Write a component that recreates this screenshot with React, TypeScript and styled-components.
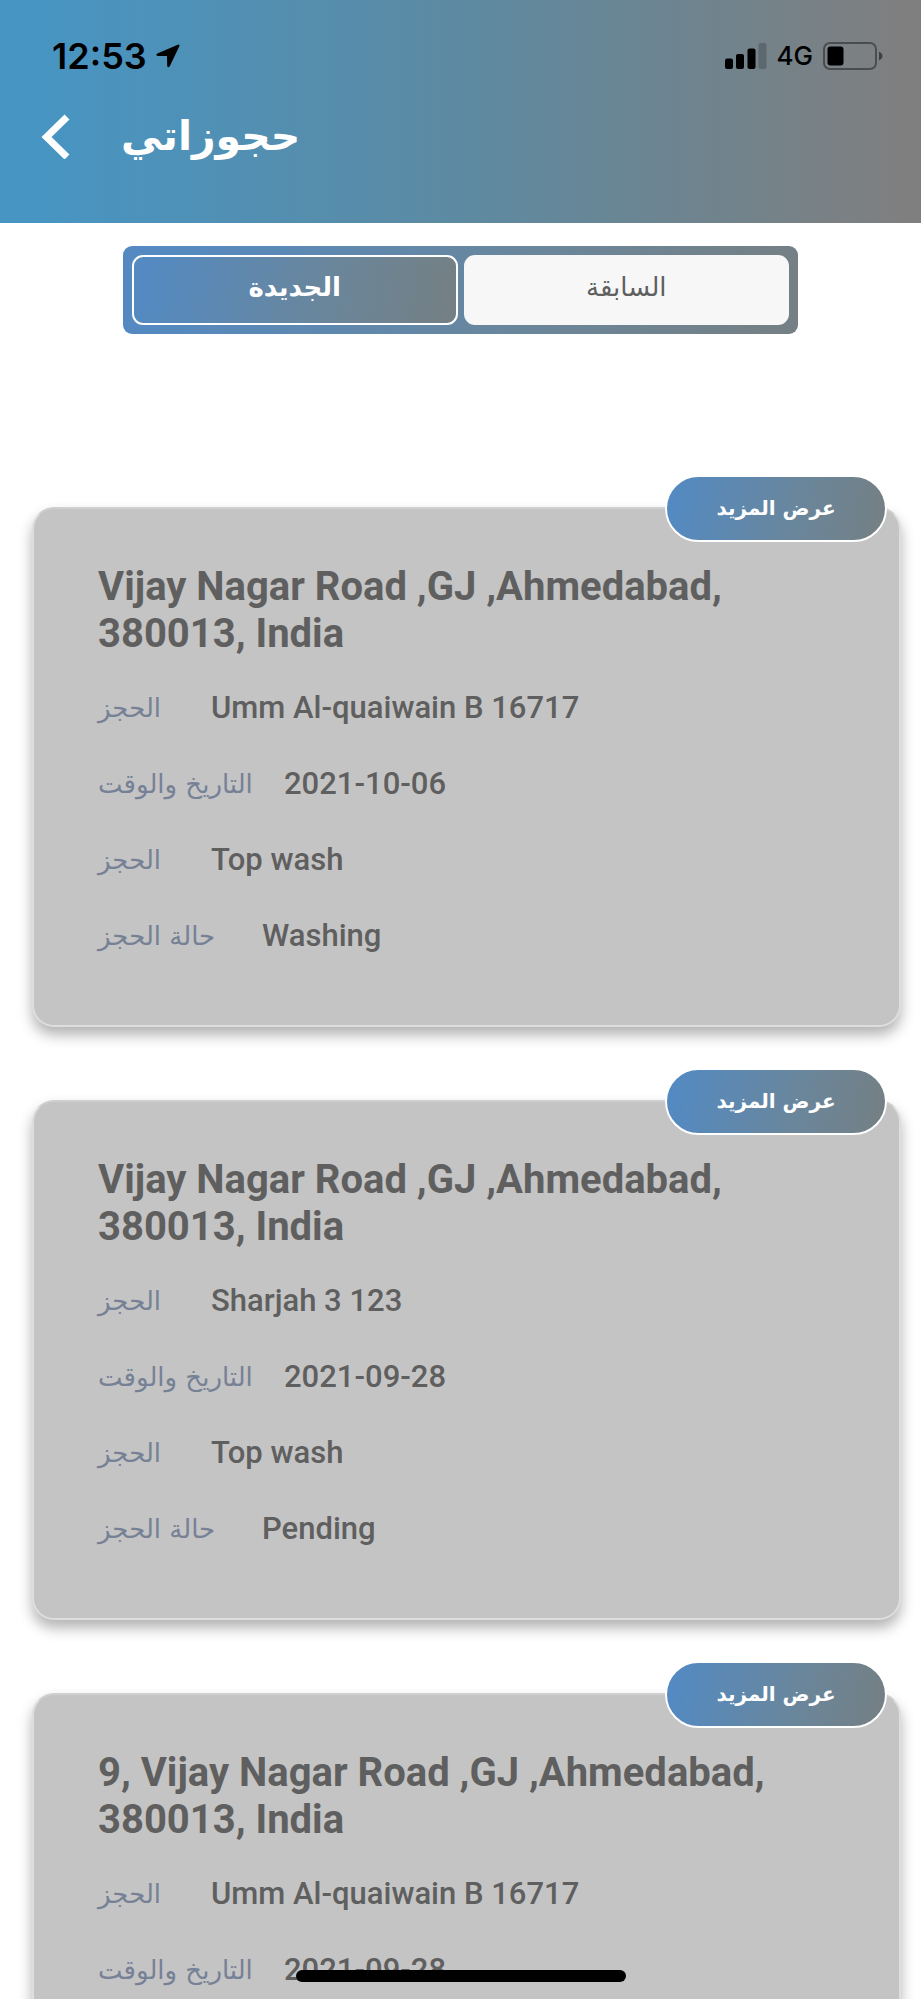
import React from "react";
import styled, { createGlobalStyle } from "styled-components";

const GlobalStyle = createGlobalStyle`
  *, *::before, *::after { box-sizing: border-box; }
  body { margin: 0; background: #fff; }
  button { font: inherit; color: inherit; cursor: pointer; }
`;

const arabic = `"DejaVu Sans", "Noto Sans", sans-serif`;
const blueToGray = "linear-gradient(100deg, #548ac1 6%, #6a869b 60%, #748085 96%)";

const Screen = styled.div`
  position: relative;
  height: 100vh;
  overflow: hidden;
  padding: 0 3px 0 0;
  background: #fff;
  border-bottom: 1px solid #fff;
  font-family: Roboto, sans-serif;
  color: #5f5f5f;
`;

const Header = styled.header`
  height: 223px;
  background: linear-gradient(90deg, #4795c3 4%, #5d8aa2 50%, #6f848e 76%, #807f7f 99%);
`;

const StatusBar = styled.div`
  display: flex;
  align-items: center;
  justify-content: space-between;
  height: 112px;
  padding: 0 38px 0 52px;
  color: #000;
  font-family: Inter, sans-serif;
`;

const StatusGroup = styled.div<{ $gap: number }>`
  display: flex;
  align-items: center;
  gap: ${(p) => p.$gap}px;
`;

const Clock = styled.span`
  font-size: 36px;
  font-weight: 600;
  line-height: 40px;
`;

const Network = styled.span`
  font-size: 26px;
  font-weight: 500;
  line-height: 32px;
`;

const TitleBar = styled.div`
  display: flex;
  align-items: center;
  gap: 51px;
  height: 48px;
  padding-left: 40px;
  color: #fff;
`;

const BackButton = styled.button`
  display: flex;
  padding: 0;
  border: 0;
  background: none;
`;

const PageTitle = styled.h1`
  margin: 0;
  font: 700 41px/48px ${arabic};
`;

const Tabs = styled.div`
  display: flex;
  gap: 6px;
  height: 88px;
  margin: 23px 123px 0;
  padding: 9px;
  border-radius: 9px;
  background: ${blueToGray};
`;

const Tab = styled.button<{ $active?: boolean }>`
  flex: 1;
  padding: 0 0 6px;
  border-radius: 11px;
  border: 2px solid ${(p) => (p.$active ? "#fff" : "#f7f7f7")};
  background: ${(p) => (p.$active ? blueToGray : "#f7f7f7")};
  background-origin: border-box;
  color: ${(p) => (p.$active ? "#fff" : "#5f5f5f")};
  font: ${(p) => (p.$active ? 700 : 400)} 26px/32px ${arabic};
`;

const List = styled.main`
  display: flex;
  flex-direction: column;
  gap: 73px;
  padding: 173px 20px 0 32px;
`;

const Card = styled.article`
  position: relative;
  min-height: 520px;
  padding: 54px 64px 44px;
  border: 2px solid #dedede;
  border-top-color: #cfcfcf;
  border-radius: 22px;
  background: #c4c4c4;
  box-shadow: 0 8px 14px rgba(0, 0, 0, 0.3);
`;

const MoreButton = styled.button`
  position: absolute;
  top: -34px;
  right: 12px;
  width: 222px;
  height: 67px;
  padding: 0 0 2px;
  border: 2px solid #fff;
  border-radius: 34px;
  background: ${blueToGray};
  background-origin: border-box;
  color: #fff;
  font: 700 20px/32px ${arabic};
`;

const Address = styled.h2`
  max-width: 680px;
  margin: 0 0 31px;
  font-size: 40px;
  font-weight: 700;
  line-height: 47px;
`;

const Details = styled.dl`
  display: flex;
  flex-direction: column;
  gap: 36px;
  margin: 0;
`;

const Detail = styled.div`
  display: flex;
  align-items: center;
  height: 40px;
`;

const labelWidths = { short: 113, medium: 164, long: 186 };
type LabelSize = keyof typeof labelWidths;

const Label = styled.dt<{ $size: LabelSize }>`
  flex: 0 0 ${(p) => labelWidths[p.$size]}px;
  color: #768196;
  font: 400 26px/32px ${arabic};
  white-space: nowrap;
`;

const Value = styled.dd`
  margin: 0;
  font-size: 31px;
  font-weight: 500;
  line-height: 40px;
`;

const HomeIndicator = styled.div`
  position: absolute;
  left: 50%;
  bottom: 17px;
  width: 330px;
  height: 12px;
  margin-left: -166px;
  border-radius: 6px;
  background: #000;
`;

type Row = { label: string; size: LabelSize; value: string };
const booking = (value: string): Row => ({ label: "الحجز", size: "short", value });
const date = (value: string): Row => ({ label: "التاريخ والوقت", size: "long", value });
const status = (value: string): Row => ({ label: "حالة الحجز", size: "medium", value });

const bookings: { address: string; rows: Row[] }[] = [
  {
    address: "Vijay Nagar Road ,GJ ,Ahmedabad, 380013, India",
    rows: [booking("Umm Al-quaiwain B 16717"), date("2021-10-06"), booking("Top wash"), status("Washing")],
  },
  {
    address: "Vijay Nagar Road ,GJ ,Ahmedabad, 380013, India",
    rows: [booking("Sharjah 3 123"), date("2021-09-28"), booking("Top wash"), status("Pending")],
  },
  {
    address: "9, Vijay Nagar Road ,GJ ,Ahmedabad, 380013, India",
    rows: [booking("Umm Al-quaiwain B 16717"), date("2021-09-28")],
  },
];

export default function App() {
  return (
    <Screen>
      <GlobalStyle />
      <Header>
        <StatusBar>
          <StatusGroup $gap={9}>
            <Clock>12:53</Clock>
            <svg width="24" height="24" viewBox="0 0 24 24" aria-hidden="true">
              <path d="M21.800.7 1.400 9.400C-.3 10.200.1 12 1.900 12H11l.2 9.500c0 2 1.900 2.400 2.700.6L23.300 2.300C23.900.9 23.100.1 21.800.7Z" fill="#000" />
            </svg>
          </StatusGroup>
          <StatusGroup $gap={10}>
            <svg width="42" height="26" viewBox="0 0 42 26" aria-hidden="true">
              <rect x="0" y="15.500" width="8" height="10.500" rx="2" />
              <rect x="11" y="11" width="8" height="15" rx="2" />
              <rect x="22.500" y="5.500" width="8" height="20.500" rx="2" />
              <rect x="33.500" y="0" width="8" height="26" rx="2" opacity="0.2" />
            </svg>
            <Network>4G</Network>
            <svg width="60" height="28" viewBox="0 0 60 28" aria-hidden="true">
              <rect x="1" y="1" width="52" height="26" rx="6" fill="none" stroke="#000" strokeOpacity="0.4" strokeWidth="2" />
              <rect x="4.500" y="4.500" width="16" height="19" rx="3" />
              <path d="M56 9.500q3.500 2 3.500 4.500T56 18.500Z" opacity="0.5" />
            </svg>
          </StatusGroup>
        </StatusBar>
        <TitleBar>
          <BackButton aria-label="رجوع">
            <svg width="30" height="46" viewBox="0 0 30 46" aria-hidden="true">
              <path d="M27 4 6.500 24 27 44" fill="none" stroke="#fff" strokeWidth="7" />
            </svg>
          </BackButton>
          <PageTitle dir="rtl" lang="ar">حجوزاتي</PageTitle>
        </TitleBar>
      </Header>
      <Tabs role="tablist">
        <Tab $active role="tab" aria-selected="true" lang="ar">الجديدة</Tab>
        <Tab role="tab" aria-selected="false" lang="ar">السابقة</Tab>
      </Tabs>
      <List>
        {bookings.map((item, i) => (
          <Card key={i}>
            <MoreButton dir="rtl" lang="ar">عرض المزيد</MoreButton>
            <Address>{item.address}</Address>
            <Details>
              {item.rows.map((row, j) => (
                <Detail key={j}>
                  <Label $size={row.size} lang="ar">{row.label}</Label>
                  <Value>{row.value}</Value>
                </Detail>
              ))}
            </Details>
          </Card>
        ))}
      </List>
      <HomeIndicator />
    </Screen>
  );
}
